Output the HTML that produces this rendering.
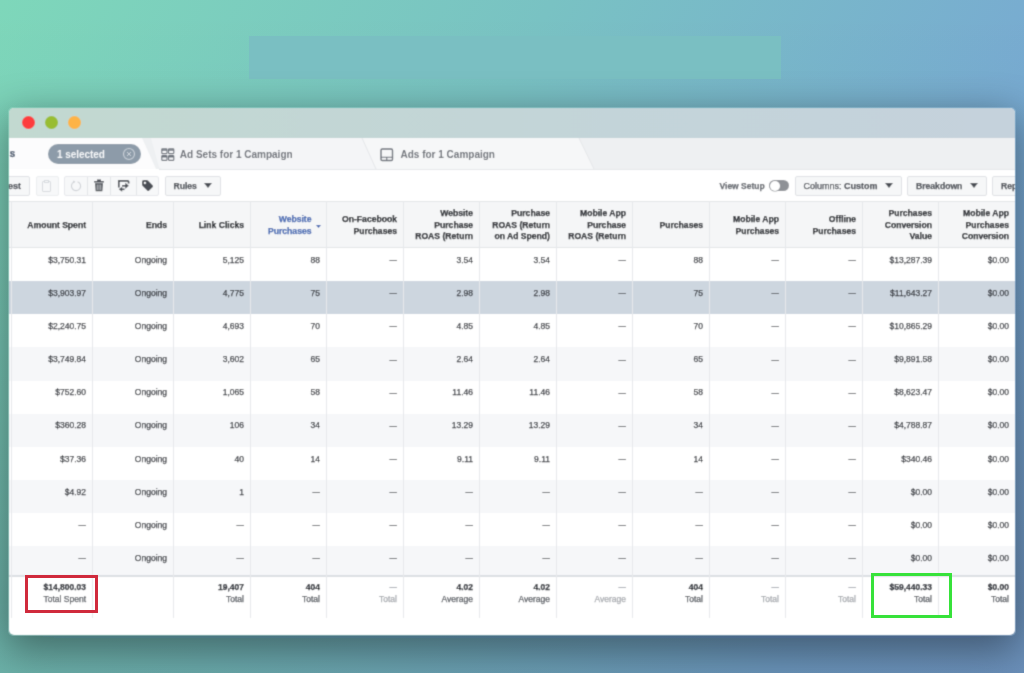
<!DOCTYPE html>
<html><head><meta charset="utf-8"><title>Ads Manager</title>
<style>
html,body{margin:0;padding:0;}
.win div{-webkit-text-stroke:0.25px currentColor;}
body{width:1024px;height:673px;overflow:hidden;position:relative;font-family:"Liberation Sans",sans-serif;
background:linear-gradient(118deg,#7ed7ba 0%,#79c2c3 40%,#78a8d3 82%,#7aa4d4 100%);}
.shade{position:absolute;left:0;top:0;width:1024px;height:673px;background:linear-gradient(180deg,rgba(0,0,0,0) 0%,rgba(0,0,0,0.03) 40%,rgba(0,0,0,0.12) 100%);}
.rect{position:absolute;left:249px;top:36px;width:532px;height:43px;background:#7abfc2;}
.win{filter:url(#soft);position:absolute;left:9px;top:108px;width:1006px;height:527px;background:#fff;border-radius:5px;overflow:hidden;
box-shadow:0 12px 40px 4px rgba(0,15,20,0.4);}
.title{position:absolute;left:0;top:0;width:1006px;height:30px;background:linear-gradient(90deg,#c2d9d0,#c3d4d9 60%,#c5d2dc);}
.dot{position:absolute;top:7.5px;width:13px;height:13px;border-radius:50%;}
.abs{position:absolute;}
.tabbar{position:absolute;left:0;top:30px;width:1006px;height:31px;background:#eef0f2;}
.tabline{position:absolute;left:150px;top:61px;width:856px;height:1px;background:#e3e5e8;}
.toolbar{position:absolute;left:0;top:62px;width:1006px;height:31px;background:#fff;}
.btn{position:absolute;top:68px;height:18px;border:1px solid #dfe1e5;background:#f6f7f8;border-radius:2px;box-sizing:content-box;}
.txt{position:absolute;white-space:nowrap;line-height:12px;}
.hd{position:absolute;top:93px;height:47px;background:#f5f6f7;border-top:1px solid #e3e5e8;border-bottom:1px solid #e3e5e8;box-sizing:border-box;}
.vl{position:absolute;width:1px;background:#e6e8eb;}
.cell{position:absolute;text-align:right;white-space:nowrap;font-size:8.5px;color:#33363c;line-height:12px;}
.hcell{position:absolute;text-align:right;white-space:nowrap;font-size:8.6px;font-weight:bold;color:#22252a;line-height:11.5px;}
</style></head><body>
<svg width="0" height="0" style="position:absolute"><defs><filter id="soft" x="-10%" y="-15%" width="120%" height="130%"><feConvolveMatrix order="3" kernelMatrix="1 4 1 4 16 4 1 4 1" divisor="36" edgeMode="duplicate"/></filter></defs></svg>
<div class="shade"></div>
<div class="rect"></div>
<div class="win">
 <div class="title">
  <div class="dot" style="left:13px;background:#fd3e3e"></div>
  <div class="dot" style="left:36px;background:#98bd30"></div>
  <div class="dot" style="left:59px;background:#fdb346"></div>
 </div>

 <div class="tabbar"></div>
 <svg class="abs" style="left:0;top:30px" width="1006" height="32" viewBox="0 0 1006 32">
  <polygon points="0,0 133,0 147,31 0,31" fill="#fcfcfd"/>
  <path d="M142,0 L353,0 L367,31 L154,31 Q151,31 150,29 Z" fill="#f4f5f7"/>
  <polygon points="353,0 570,0 585,31 367,31" fill="#f6f7f8"/>
  <line x1="353" y1="0" x2="367" y2="31" stroke="#e4e6e9" stroke-width="1"/>
  <line x1="570" y1="0" x2="585" y2="31" stroke="#e4e6e9" stroke-width="1"/>
  <line x1="150" y1="31.5" x2="1006" y2="31.5" stroke="#e5e7ea" stroke-width="1"/>
 </svg>
 <div class="txt" style="left:0.5px;top:39px;font-size:10.5px;font-weight:bold;color:#4b5a6e">s</div>
 <div class="abs" style="left:39px;top:36px;width:93px;height:20px;border-radius:10px;background:#8d9ba9"></div>
 <div class="txt" style="left:48px;top:40.5px;font-size:10px;font-weight:bold;color:#f4f6f8;-webkit-text-stroke:0;letter-spacing:-0.05px">1 selected</div>
 <svg class="abs" style="left:112.5px;top:39.2px" width="14" height="14" viewBox="0 0 14 14"><circle cx="7" cy="7" r="5.5" fill="none" stroke="#c9d0d8" stroke-width="1.1"/><path d="M5 5L9 9M9 5L5 9" stroke="#c9d0d8" stroke-width="1"/></svg>
 <svg class="abs" style="left:152px;top:39.5px" width="14" height="14" viewBox="0 0 14 14" fill="none" stroke="#6b7079" stroke-width="1.1"><rect x="0.8" y="0.8" width="5.2" height="4.8" rx="0.6"/><rect x="7.6" y="0.8" width="5.2" height="4.8" rx="0.6"/><rect x="0.8" y="7.6" width="5.2" height="4.8" rx="0.6"/><rect x="7.6" y="7.6" width="5.2" height="4.8" rx="0.6"/><path d="M0.8 2H6M7.6 2H12.8M0.8 8.8H6M7.6 8.8H12.8" stroke-width="1.6"/></svg>
 <div class="txt" style="left:170.8px;top:40.5px;font-size:10px;font-weight:bold;color:#6d7178;-webkit-text-stroke:0">Ad Sets for 1 Campaign</div>
 <svg class="abs" style="left:371px;top:40px" width="14" height="14" viewBox="0 0 14 14" fill="none" stroke="#6b7079" stroke-width="1.4"><rect x="1" y="1" width="11.5" height="11.5" rx="1.2"/><path d="M1 9.2H12.5M6.75 9.2V12.5" stroke-width="1.1"/></svg>
 <div class="txt" style="left:391.5px;top:40.5px;font-size:10px;font-weight:bold;color:#6d7178;-webkit-text-stroke:0">Ads for 1 Campaign</div>

 <div class="btn" style="left:-40px;width:59px;"></div>
 <div class="txt" style="right:994px;top:71.5px;font-size:9px;font-weight:bold;color:#4b4f56">A/B Test</div>
 <div class="btn" style="left:26.5px;width:21px;border-color:#eceef0;background:#f7f8f9"></div>
 <svg class="abs" style="left:32px;top:72px" width="11" height="12" viewBox="0 0 11 12" fill="none" stroke="#d8dbdf" stroke-width="1"><rect x="1.5" y="1.5" width="8" height="10" rx="0.5"/><rect x="3.5" y="0.5" width="4" height="2" fill="#f7f8f9"/></svg>
 <div class="btn" style="left:55px;width:93px;border-color:#e7e9ec;background:#f7f8f9"></div>
 <div class="vl" style="left:78px;top:69px;height:18px;background:#e3e5e8"></div>
 <div class="vl" style="left:101px;top:69px;height:18px;background:#e3e5e8"></div>
 <div class="vl" style="left:127px;top:69px;height:18px;background:#e3e5e8"></div>
 <svg class="abs" style="left:61px;top:72px" width="12" height="12" viewBox="0 0 12 12"><path d="M7.6 1.7A4.6 4.6 0 1 1 4.2 1.8" fill="none" stroke="#cfd2d6" stroke-width="1.1"/><path d="M3 0.6L5.4 1.6L3.6 3.4Z" fill="#cfd2d6"/></svg>
 <svg class="abs" style="left:84px;top:71px" width="12" height="13" viewBox="0 0 12 13" fill="#4b4f56"><rect x="1" y="2" width="10" height="1.6" rx="0.5"/><rect x="4" y="0.5" width="4" height="2"/><path d="M2 4.3H10L9.3 12.3H2.7Z"/><path d="M4.2 5.5V11M6 5.5V11M7.8 5.5V11" stroke="#f7f8f9" stroke-width="0.7"/></svg>
 <svg class="abs" style="left:108px;top:71px" width="13" height="13" viewBox="0 0 13 13"><path d="M1.8 8.5V1.8H10.6Q11.6 1.8 11.6 2.8V4.6" fill="none" stroke="#4b4f56" stroke-width="1.7"/><path d="M3 5.3H9.5V7H3Z" fill="#fff" opacity="0"/><path d="M8.3 3.8L11.8 6.8L8.3 9.8Z" fill="#4b4f56"/><path d="M5 6.8H9" stroke="#4b4f56" stroke-width="1.6"/><path d="M5.2 7.8L1.8 10.3L5.2 12.8Z" fill="#4b4f56"/><path d="M4.5 10.3H7.5" stroke="#4b4f56" stroke-width="1.6"/></svg>
 <svg class="abs" style="left:132px;top:71px" width="13" height="14" viewBox="0 0 13 14"><path d="M1 2.8Q1 1 2.8 1H5.6Q6.4 1 7 1.6L11.6 6.2Q12.6 7.2 11.6 8.2L8.2 11.6Q7.2 12.6 6.2 11.6L1.6 7Q1 6.4 1 5.6Z" fill="#4b4f56"/><circle cx="3.9" cy="3.9" r="1.1" fill="#f7f8f9"/></svg>
 <div class="btn" style="left:156px;width:54px;"></div>
 <div class="txt" style="left:164.5px;top:71.5px;font-size:8.6px;font-weight:bold;color:#4b4f56">Rules</div>
 <svg class="abs" style="left:195px;top:75px" width="8" height="5" viewBox="0 0 8 5"><path d="M0 0H8L4 5Z" fill="#4b4f56"/></svg>

 <div class="txt" style="left:710.5px;top:71.5px;font-size:8.5px;font-weight:bold;color:#62666d">View Setup</div>
 <div class="abs" style="left:760px;top:72px;width:20px;height:11px;border-radius:6px;background:#8e9196"></div>
 <div class="abs" style="left:760.5px;top:72.5px;width:10px;height:10px;border-radius:50%;background:#fff;box-shadow:0 0 0 0.6px #8e9196"></div>
 <div class="btn" style="left:786px;width:105px;"></div>
 <div class="txt" style="left:794.5px;top:71.5px;font-size:9px;color:#4b4f56">Columns: <b>Custom</b></div>
 <svg class="abs" style="left:876px;top:75px" width="8" height="5" viewBox="0 0 8 5"><path d="M0 0H8L4 5Z" fill="#4b4f56"/></svg>
 <div class="btn" style="left:898px;width:78px;"></div>
 <div class="txt" style="left:907px;top:71.5px;font-size:8.6px;font-weight:bold;color:#4b4f56">Breakdown</div>
 <svg class="abs" style="left:961px;top:75px" width="8" height="5" viewBox="0 0 8 5"><path d="M0 0H8L4 5Z" fill="#4b4f56"/></svg>
 <div class="btn" style="left:983px;width:60px;"></div>
 <div class="txt" style="left:992px;top:71.5px;font-size:8.6px;font-weight:bold;color:#4b4f56">Reports</div>
 <div class="hd" style="left:0px;width:1006px"></div>
 <div class="abs" style="left:0px;top:140.0px;width:1006px;height:33.4px;background:#ffffff"></div>
 <div class="abs" style="left:0px;top:173.1px;width:1006px;height:33.4px;background:#cdd6df"></div>
 <div class="abs" style="left:0px;top:206.3px;width:1006px;height:33.4px;background:#ffffff"></div>
 <div class="abs" style="left:0px;top:239.4px;width:1006px;height:33.4px;background:#f6f7f9"></div>
 <div class="abs" style="left:0px;top:272.6px;width:1006px;height:33.4px;background:#ffffff"></div>
 <div class="abs" style="left:0px;top:305.8px;width:1006px;height:33.4px;background:#f6f7f9"></div>
 <div class="abs" style="left:0px;top:338.9px;width:1006px;height:33.4px;background:#ffffff"></div>
 <div class="abs" style="left:0px;top:372.0px;width:1006px;height:33.4px;background:#f6f7f9"></div>
 <div class="abs" style="left:0px;top:405.2px;width:1006px;height:33.4px;background:#ffffff"></div>
 <div class="abs" style="left:0px;top:438.3px;width:1006px;height:29.7px;background:#f6f7f9"></div>
 <div class="abs" style="left:0px;top:467.29999999999995px;width:1006px;height:2px;background:#dcdfe3"></div>
 <div class="vl" style="left:2px;top:93px;height:417px"></div>
 <div class="vl" style="left:83px;top:93px;height:417px"></div>
 <div class="vl" style="left:164px;top:93px;height:417px"></div>
 <div class="vl" style="left:241px;top:93px;height:417px"></div>
 <div class="vl" style="left:317px;top:93px;height:417px"></div>
 <div class="vl" style="left:394px;top:93px;height:417px"></div>
 <div class="vl" style="left:470px;top:93px;height:417px"></div>
 <div class="vl" style="left:547px;top:93px;height:417px"></div>
 <div class="vl" style="left:623px;top:93px;height:417px"></div>
 <div class="vl" style="left:700px;top:93px;height:417px"></div>
 <div class="vl" style="left:776px;top:93px;height:417px"></div>
 <div class="vl" style="left:853px;top:93px;height:417px"></div>
 <div class="vl" style="left:929px;top:93px;height:417px"></div>
 <div class="hcell" style="right:929px;top:111.8px;color:#22252a">Amount Spent</div>
 <div class="hcell" style="right:848px;top:111.8px;color:#22252a">Ends</div>
 <div class="hcell" style="right:771px;top:111.8px;color:#22252a">Link Clicks</div>
 <div class="hcell" style="right:703.5px;top:106.1px;color:#4267b2">Website<br>Purchases</div>
 <div class="hcell" style="right:618px;top:106.1px;color:#22252a">On-Facebook<br>Purchases</div>
 <div class="hcell" style="right:542px;top:100.3px;color:#22252a">Website<br>Purchase<br>ROAS (Return</div>
 <div class="hcell" style="right:465px;top:100.3px;color:#22252a">Purchase<br>ROAS (Return<br>on Ad Spend)</div>
 <div class="hcell" style="right:389px;top:100.3px;color:#22252a">Mobile App<br>Purchase<br>ROAS (Return</div>
 <div class="hcell" style="right:312px;top:111.8px;color:#22252a">Purchases</div>
 <div class="hcell" style="right:236px;top:106.1px;color:#22252a">Mobile App<br>Purchases</div>
 <div class="hcell" style="right:159px;top:106.1px;color:#22252a">Offline<br>Purchases</div>
 <div class="hcell" style="right:83px;top:100.3px;color:#22252a">Purchases<br>Conversion<br>Value</div>
 <div class="hcell" style="right:6px;top:100.3px;color:#22252a">Mobile App<br>Purchases<br>Conversion</div>
 <svg class="abs" style="left:306.5px;top:117px" width="5" height="3" viewBox="0 0 5 3"><path d="M0 0H5L2.5 3Z" fill="#4267b2"/></svg>
 <div class="cell" style="right:929px;top:145.7px;color:#33363c">$3,750.31</div>
 <div class="cell" style="right:848px;top:145.7px;color:#33363c">Ongoing</div>
 <div class="cell" style="right:771px;top:145.7px;color:#33363c">5,125</div>
 <div class="cell" style="right:695px;top:145.7px;color:#33363c">88</div>
 <div class="cell" style="right:618px;top:145.7px;color:#33363c"><span style="font-size:7.4px;position:relative;top:-0.6px">&mdash;</span></div>
 <div class="cell" style="right:542px;top:145.7px;color:#33363c">3.54</div>
 <div class="cell" style="right:465px;top:145.7px;color:#33363c">3.54</div>
 <div class="cell" style="right:389px;top:145.7px;color:#33363c"><span style="font-size:7.4px;position:relative;top:-0.6px">&mdash;</span></div>
 <div class="cell" style="right:312px;top:145.7px;color:#33363c">88</div>
 <div class="cell" style="right:236px;top:145.7px;color:#33363c"><span style="font-size:7.4px;position:relative;top:-0.6px">&mdash;</span></div>
 <div class="cell" style="right:159px;top:145.7px;color:#33363c"><span style="font-size:7.4px;position:relative;top:-0.6px">&mdash;</span></div>
 <div class="cell" style="right:83px;top:145.7px;color:#33363c">$13,287.39</div>
 <div class="cell" style="right:6px;top:145.7px;color:#33363c">$0.00</div>
 <div class="cell" style="right:929px;top:178.8px;color:#33363c">$3,903.97</div>
 <div class="cell" style="right:848px;top:178.8px;color:#33363c">Ongoing</div>
 <div class="cell" style="right:771px;top:178.8px;color:#33363c">4,775</div>
 <div class="cell" style="right:695px;top:178.8px;color:#33363c">75</div>
 <div class="cell" style="right:618px;top:178.8px;color:#33363c"><span style="font-size:7.4px;position:relative;top:-0.6px">&mdash;</span></div>
 <div class="cell" style="right:542px;top:178.8px;color:#33363c">2.98</div>
 <div class="cell" style="right:465px;top:178.8px;color:#33363c">2.98</div>
 <div class="cell" style="right:389px;top:178.8px;color:#33363c"><span style="font-size:7.4px;position:relative;top:-0.6px">&mdash;</span></div>
 <div class="cell" style="right:312px;top:178.8px;color:#33363c">75</div>
 <div class="cell" style="right:236px;top:178.8px;color:#33363c"><span style="font-size:7.4px;position:relative;top:-0.6px">&mdash;</span></div>
 <div class="cell" style="right:159px;top:178.8px;color:#33363c"><span style="font-size:7.4px;position:relative;top:-0.6px">&mdash;</span></div>
 <div class="cell" style="right:83px;top:178.8px;color:#33363c">$11,643.27</div>
 <div class="cell" style="right:6px;top:178.8px;color:#33363c">$0.00</div>
 <div class="cell" style="right:929px;top:212.0px;color:#33363c">$2,240.75</div>
 <div class="cell" style="right:848px;top:212.0px;color:#33363c">Ongoing</div>
 <div class="cell" style="right:771px;top:212.0px;color:#33363c">4,693</div>
 <div class="cell" style="right:695px;top:212.0px;color:#33363c">70</div>
 <div class="cell" style="right:618px;top:212.0px;color:#33363c"><span style="font-size:7.4px;position:relative;top:-0.6px">&mdash;</span></div>
 <div class="cell" style="right:542px;top:212.0px;color:#33363c">4.85</div>
 <div class="cell" style="right:465px;top:212.0px;color:#33363c">4.85</div>
 <div class="cell" style="right:389px;top:212.0px;color:#33363c"><span style="font-size:7.4px;position:relative;top:-0.6px">&mdash;</span></div>
 <div class="cell" style="right:312px;top:212.0px;color:#33363c">70</div>
 <div class="cell" style="right:236px;top:212.0px;color:#33363c"><span style="font-size:7.4px;position:relative;top:-0.6px">&mdash;</span></div>
 <div class="cell" style="right:159px;top:212.0px;color:#33363c"><span style="font-size:7.4px;position:relative;top:-0.6px">&mdash;</span></div>
 <div class="cell" style="right:83px;top:212.0px;color:#33363c">$10,865.29</div>
 <div class="cell" style="right:6px;top:212.0px;color:#33363c">$0.00</div>
 <div class="cell" style="right:929px;top:245.1px;color:#33363c">$3,749.84</div>
 <div class="cell" style="right:848px;top:245.1px;color:#33363c">Ongoing</div>
 <div class="cell" style="right:771px;top:245.1px;color:#33363c">3,602</div>
 <div class="cell" style="right:695px;top:245.1px;color:#33363c">65</div>
 <div class="cell" style="right:618px;top:245.1px;color:#33363c"><span style="font-size:7.4px;position:relative;top:-0.6px">&mdash;</span></div>
 <div class="cell" style="right:542px;top:245.1px;color:#33363c">2.64</div>
 <div class="cell" style="right:465px;top:245.1px;color:#33363c">2.64</div>
 <div class="cell" style="right:389px;top:245.1px;color:#33363c"><span style="font-size:7.4px;position:relative;top:-0.6px">&mdash;</span></div>
 <div class="cell" style="right:312px;top:245.1px;color:#33363c">65</div>
 <div class="cell" style="right:236px;top:245.1px;color:#33363c"><span style="font-size:7.4px;position:relative;top:-0.6px">&mdash;</span></div>
 <div class="cell" style="right:159px;top:245.1px;color:#33363c"><span style="font-size:7.4px;position:relative;top:-0.6px">&mdash;</span></div>
 <div class="cell" style="right:83px;top:245.1px;color:#33363c">$9,891.58</div>
 <div class="cell" style="right:6px;top:245.1px;color:#33363c">$0.00</div>
 <div class="cell" style="right:929px;top:278.3px;color:#33363c">$752.60</div>
 <div class="cell" style="right:848px;top:278.3px;color:#33363c">Ongoing</div>
 <div class="cell" style="right:771px;top:278.3px;color:#33363c">1,065</div>
 <div class="cell" style="right:695px;top:278.3px;color:#33363c">58</div>
 <div class="cell" style="right:618px;top:278.3px;color:#33363c"><span style="font-size:7.4px;position:relative;top:-0.6px">&mdash;</span></div>
 <div class="cell" style="right:542px;top:278.3px;color:#33363c">11.46</div>
 <div class="cell" style="right:465px;top:278.3px;color:#33363c">11.46</div>
 <div class="cell" style="right:389px;top:278.3px;color:#33363c"><span style="font-size:7.4px;position:relative;top:-0.6px">&mdash;</span></div>
 <div class="cell" style="right:312px;top:278.3px;color:#33363c">58</div>
 <div class="cell" style="right:236px;top:278.3px;color:#33363c"><span style="font-size:7.4px;position:relative;top:-0.6px">&mdash;</span></div>
 <div class="cell" style="right:159px;top:278.3px;color:#33363c"><span style="font-size:7.4px;position:relative;top:-0.6px">&mdash;</span></div>
 <div class="cell" style="right:83px;top:278.3px;color:#33363c">$8,623.47</div>
 <div class="cell" style="right:6px;top:278.3px;color:#33363c">$0.00</div>
 <div class="cell" style="right:929px;top:311.4px;color:#33363c">$360.28</div>
 <div class="cell" style="right:848px;top:311.4px;color:#33363c">Ongoing</div>
 <div class="cell" style="right:771px;top:311.4px;color:#33363c">106</div>
 <div class="cell" style="right:695px;top:311.4px;color:#33363c">34</div>
 <div class="cell" style="right:618px;top:311.4px;color:#33363c"><span style="font-size:7.4px;position:relative;top:-0.6px">&mdash;</span></div>
 <div class="cell" style="right:542px;top:311.4px;color:#33363c">13.29</div>
 <div class="cell" style="right:465px;top:311.4px;color:#33363c">13.29</div>
 <div class="cell" style="right:389px;top:311.4px;color:#33363c"><span style="font-size:7.4px;position:relative;top:-0.6px">&mdash;</span></div>
 <div class="cell" style="right:312px;top:311.4px;color:#33363c">34</div>
 <div class="cell" style="right:236px;top:311.4px;color:#33363c"><span style="font-size:7.4px;position:relative;top:-0.6px">&mdash;</span></div>
 <div class="cell" style="right:159px;top:311.4px;color:#33363c"><span style="font-size:7.4px;position:relative;top:-0.6px">&mdash;</span></div>
 <div class="cell" style="right:83px;top:311.4px;color:#33363c">$4,788.87</div>
 <div class="cell" style="right:6px;top:311.4px;color:#33363c">$0.00</div>
 <div class="cell" style="right:929px;top:344.6px;color:#33363c">$37.36</div>
 <div class="cell" style="right:848px;top:344.6px;color:#33363c">Ongoing</div>
 <div class="cell" style="right:771px;top:344.6px;color:#33363c">40</div>
 <div class="cell" style="right:695px;top:344.6px;color:#33363c">14</div>
 <div class="cell" style="right:618px;top:344.6px;color:#33363c"><span style="font-size:7.4px;position:relative;top:-0.6px">&mdash;</span></div>
 <div class="cell" style="right:542px;top:344.6px;color:#33363c">9.11</div>
 <div class="cell" style="right:465px;top:344.6px;color:#33363c">9.11</div>
 <div class="cell" style="right:389px;top:344.6px;color:#33363c"><span style="font-size:7.4px;position:relative;top:-0.6px">&mdash;</span></div>
 <div class="cell" style="right:312px;top:344.6px;color:#33363c">14</div>
 <div class="cell" style="right:236px;top:344.6px;color:#33363c"><span style="font-size:7.4px;position:relative;top:-0.6px">&mdash;</span></div>
 <div class="cell" style="right:159px;top:344.6px;color:#33363c"><span style="font-size:7.4px;position:relative;top:-0.6px">&mdash;</span></div>
 <div class="cell" style="right:83px;top:344.6px;color:#33363c">$340.46</div>
 <div class="cell" style="right:6px;top:344.6px;color:#33363c">$0.00</div>
 <div class="cell" style="right:929px;top:377.7px;color:#33363c">$4.92</div>
 <div class="cell" style="right:848px;top:377.7px;color:#33363c">Ongoing</div>
 <div class="cell" style="right:771px;top:377.7px;color:#33363c">1</div>
 <div class="cell" style="right:695px;top:377.7px;color:#33363c"><span style="font-size:7.4px;position:relative;top:-0.6px">&mdash;</span></div>
 <div class="cell" style="right:618px;top:377.7px;color:#33363c"><span style="font-size:7.4px;position:relative;top:-0.6px">&mdash;</span></div>
 <div class="cell" style="right:542px;top:377.7px;color:#33363c"><span style="font-size:7.4px;position:relative;top:-0.6px">&mdash;</span></div>
 <div class="cell" style="right:465px;top:377.7px;color:#33363c"><span style="font-size:7.4px;position:relative;top:-0.6px">&mdash;</span></div>
 <div class="cell" style="right:389px;top:377.7px;color:#33363c"><span style="font-size:7.4px;position:relative;top:-0.6px">&mdash;</span></div>
 <div class="cell" style="right:312px;top:377.7px;color:#33363c"><span style="font-size:7.4px;position:relative;top:-0.6px">&mdash;</span></div>
 <div class="cell" style="right:236px;top:377.7px;color:#33363c"><span style="font-size:7.4px;position:relative;top:-0.6px">&mdash;</span></div>
 <div class="cell" style="right:159px;top:377.7px;color:#33363c"><span style="font-size:7.4px;position:relative;top:-0.6px">&mdash;</span></div>
 <div class="cell" style="right:83px;top:377.7px;color:#33363c">$0.00</div>
 <div class="cell" style="right:6px;top:377.7px;color:#33363c">$0.00</div>
 <div class="cell" style="right:929px;top:410.9px;color:#33363c"><span style="font-size:7.4px;position:relative;top:-0.6px">&mdash;</span></div>
 <div class="cell" style="right:848px;top:410.9px;color:#33363c">Ongoing</div>
 <div class="cell" style="right:771px;top:410.9px;color:#33363c"><span style="font-size:7.4px;position:relative;top:-0.6px">&mdash;</span></div>
 <div class="cell" style="right:695px;top:410.9px;color:#33363c"><span style="font-size:7.4px;position:relative;top:-0.6px">&mdash;</span></div>
 <div class="cell" style="right:618px;top:410.9px;color:#33363c"><span style="font-size:7.4px;position:relative;top:-0.6px">&mdash;</span></div>
 <div class="cell" style="right:542px;top:410.9px;color:#33363c"><span style="font-size:7.4px;position:relative;top:-0.6px">&mdash;</span></div>
 <div class="cell" style="right:465px;top:410.9px;color:#33363c"><span style="font-size:7.4px;position:relative;top:-0.6px">&mdash;</span></div>
 <div class="cell" style="right:389px;top:410.9px;color:#33363c"><span style="font-size:7.4px;position:relative;top:-0.6px">&mdash;</span></div>
 <div class="cell" style="right:312px;top:410.9px;color:#33363c"><span style="font-size:7.4px;position:relative;top:-0.6px">&mdash;</span></div>
 <div class="cell" style="right:236px;top:410.9px;color:#33363c"><span style="font-size:7.4px;position:relative;top:-0.6px">&mdash;</span></div>
 <div class="cell" style="right:159px;top:410.9px;color:#33363c"><span style="font-size:7.4px;position:relative;top:-0.6px">&mdash;</span></div>
 <div class="cell" style="right:83px;top:410.9px;color:#33363c">$0.00</div>
 <div class="cell" style="right:6px;top:410.9px;color:#33363c">$0.00</div>
 <div class="cell" style="right:929px;top:444.0px;color:#33363c"><span style="font-size:7.4px;position:relative;top:-0.6px">&mdash;</span></div>
 <div class="cell" style="right:848px;top:444.0px;color:#33363c">Ongoing</div>
 <div class="cell" style="right:771px;top:444.0px;color:#33363c"><span style="font-size:7.4px;position:relative;top:-0.6px">&mdash;</span></div>
 <div class="cell" style="right:695px;top:444.0px;color:#33363c"><span style="font-size:7.4px;position:relative;top:-0.6px">&mdash;</span></div>
 <div class="cell" style="right:618px;top:444.0px;color:#33363c"><span style="font-size:7.4px;position:relative;top:-0.6px">&mdash;</span></div>
 <div class="cell" style="right:542px;top:444.0px;color:#33363c"><span style="font-size:7.4px;position:relative;top:-0.6px">&mdash;</span></div>
 <div class="cell" style="right:465px;top:444.0px;color:#33363c"><span style="font-size:7.4px;position:relative;top:-0.6px">&mdash;</span></div>
 <div class="cell" style="right:389px;top:444.0px;color:#33363c"><span style="font-size:7.4px;position:relative;top:-0.6px">&mdash;</span></div>
 <div class="cell" style="right:312px;top:444.0px;color:#33363c"><span style="font-size:7.4px;position:relative;top:-0.6px">&mdash;</span></div>
 <div class="cell" style="right:236px;top:444.0px;color:#33363c"><span style="font-size:7.4px;position:relative;top:-0.6px">&mdash;</span></div>
 <div class="cell" style="right:159px;top:444.0px;color:#33363c"><span style="font-size:7.4px;position:relative;top:-0.6px">&mdash;</span></div>
 <div class="cell" style="right:83px;top:444.0px;color:#33363c">$0.00</div>
 <div class="cell" style="right:6px;top:444.0px;color:#33363c">$0.00</div>
 <div class="cell" style="right:929px;top:473.0px;font-weight:bold;color:#1d2129">$14,800.03</div>
 <div class="cell" style="right:929px;top:484.6px;color:#4f535a">Total Spent</div>
 <div class="cell" style="right:771px;top:473.0px;font-weight:bold;color:#1d2129">19,407</div>
 <div class="cell" style="right:771px;top:484.6px;color:#4f535a">Total</div>
 <div class="cell" style="right:695px;top:473.0px;font-weight:bold;color:#1d2129">404</div>
 <div class="cell" style="right:695px;top:484.6px;color:#4f535a">Total</div>
 <div class="cell" style="right:618px;top:473.0px;font-weight:normal;color:#90949c"><span style="font-size:7.4px;position:relative;top:-0.6px">&mdash;</span></div>
 <div class="cell" style="right:618px;top:484.6px;color:#a5a8ad">Total</div>
 <div class="cell" style="right:542px;top:473.0px;font-weight:bold;color:#1d2129">4.02</div>
 <div class="cell" style="right:542px;top:484.6px;color:#4f535a">Average</div>
 <div class="cell" style="right:465px;top:473.0px;font-weight:bold;color:#1d2129">4.02</div>
 <div class="cell" style="right:465px;top:484.6px;color:#4f535a">Average</div>
 <div class="cell" style="right:389px;top:473.0px;font-weight:normal;color:#90949c"><span style="font-size:7.4px;position:relative;top:-0.6px">&mdash;</span></div>
 <div class="cell" style="right:389px;top:484.6px;color:#a5a8ad">Average</div>
 <div class="cell" style="right:312px;top:473.0px;font-weight:bold;color:#1d2129">404</div>
 <div class="cell" style="right:312px;top:484.6px;color:#4f535a">Total</div>
 <div class="cell" style="right:236px;top:473.0px;font-weight:normal;color:#90949c"><span style="font-size:7.4px;position:relative;top:-0.6px">&mdash;</span></div>
 <div class="cell" style="right:236px;top:484.6px;color:#a5a8ad">Total</div>
 <div class="cell" style="right:159px;top:473.0px;font-weight:normal;color:#90949c"><span style="font-size:7.4px;position:relative;top:-0.6px">&mdash;</span></div>
 <div class="cell" style="right:159px;top:484.6px;color:#a5a8ad">Total</div>
 <div class="cell" style="right:83px;top:473.0px;font-weight:bold;color:#1d2129">$59,440.33</div>
 <div class="cell" style="right:83px;top:484.6px;color:#4f535a">Total</div>
 <div class="cell" style="right:6px;top:473.0px;font-weight:bold;color:#1d2129">$0.00</div>
 <div class="cell" style="right:6px;top:484.6px;color:#4f535a">Total</div>
</div>
<div class="abs" style="left:24.5px;top:575px;width:73px;height:38px;border:3.5px solid #d02a3c;box-sizing:border-box"></div>
<div class="abs" style="left:870.5px;top:572.5px;width:81px;height:45px;border:3.5px solid #37e23a;box-sizing:border-box"></div>
</body></html>
